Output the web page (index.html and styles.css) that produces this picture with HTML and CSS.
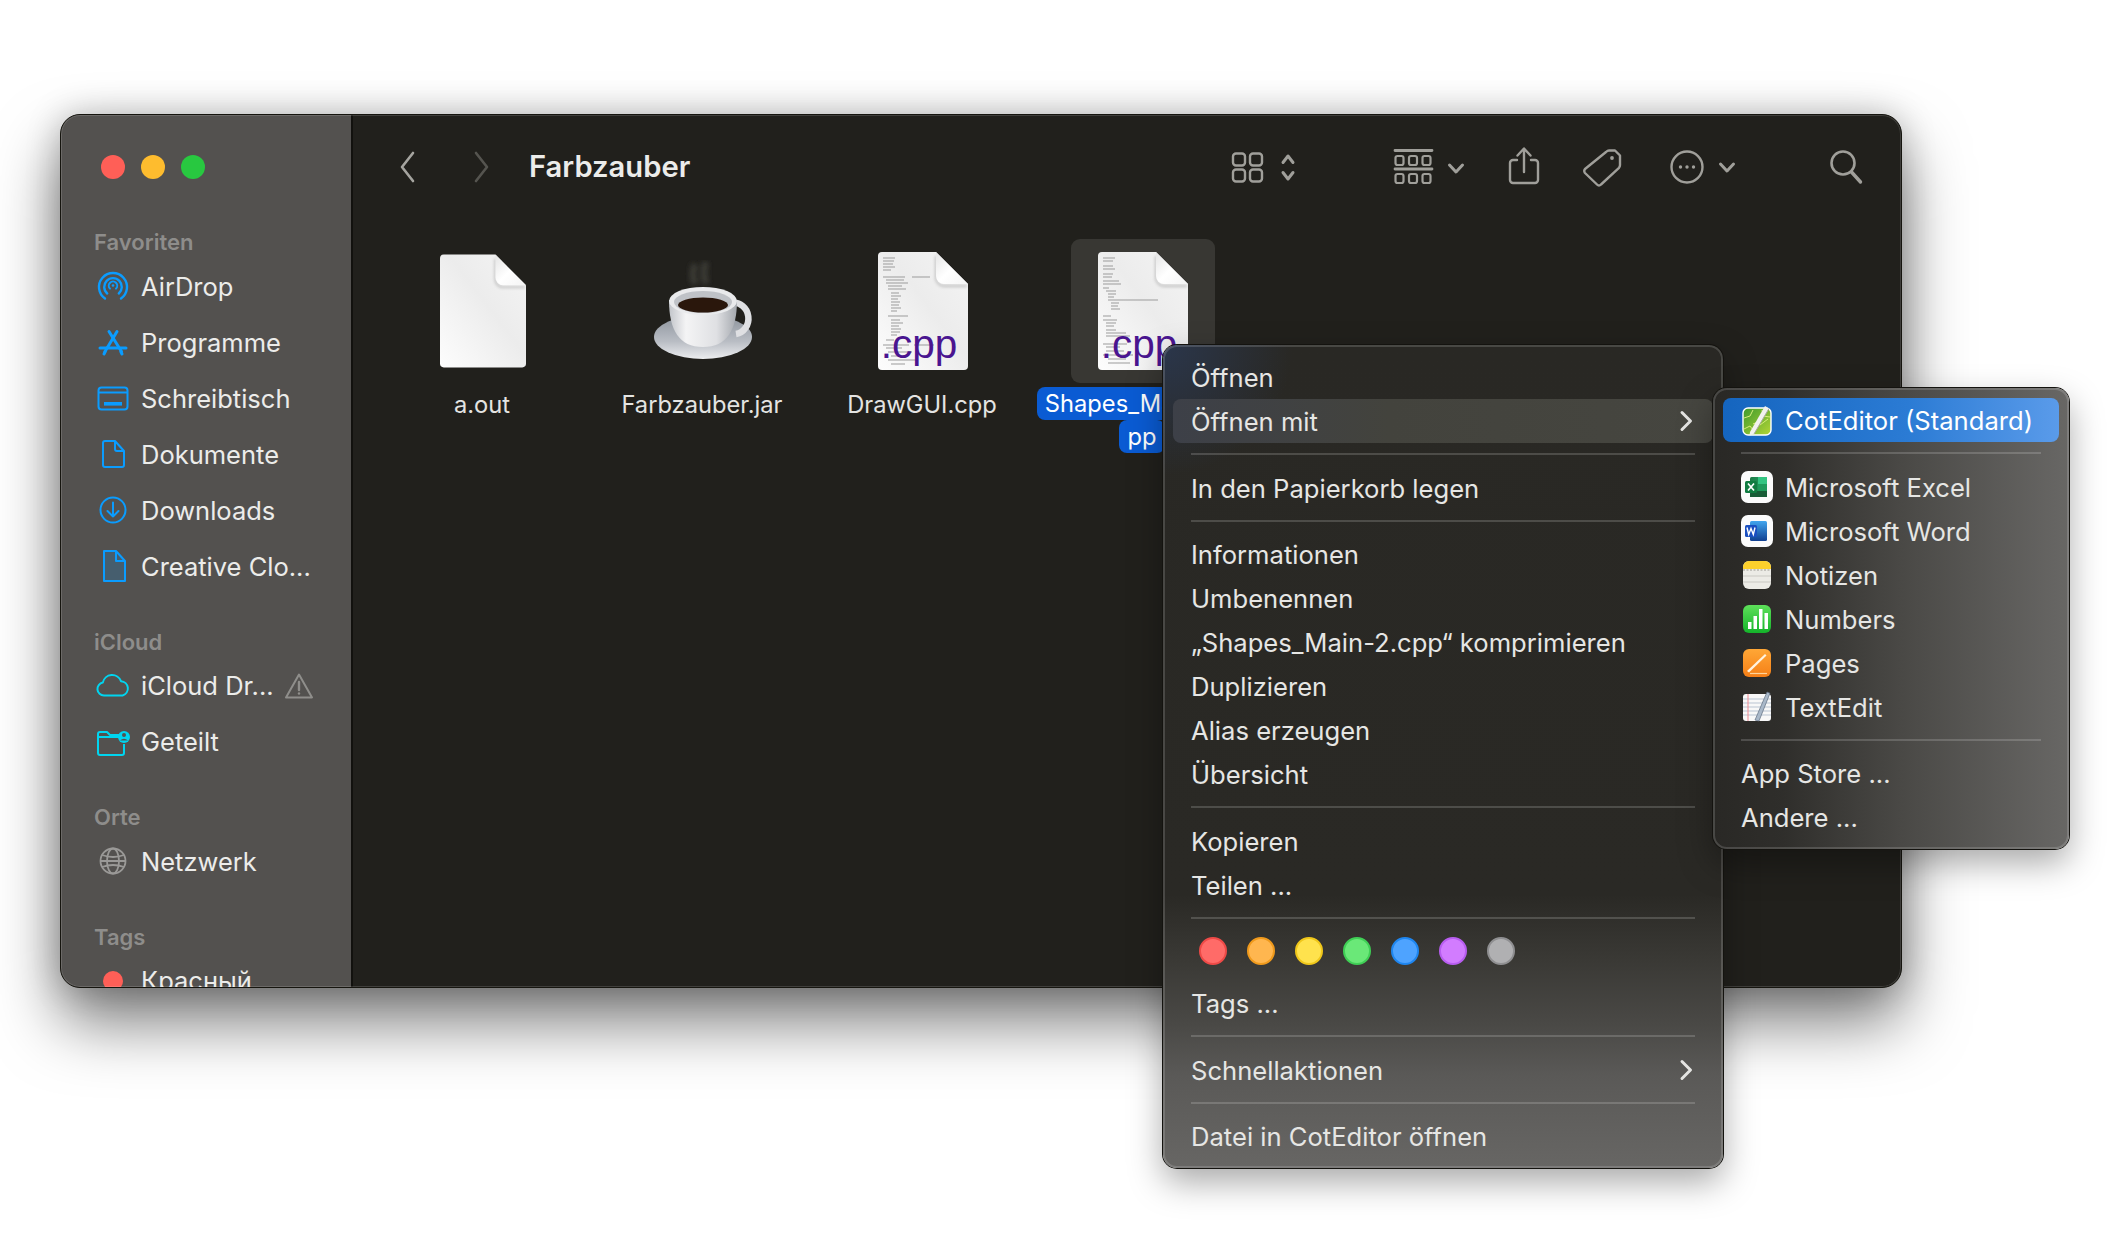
FILE: index.html
```html
<!DOCTYPE html>
<html lang="de">
<head>
<meta charset="utf-8">
<title>Farbzauber</title>
<link rel="stylesheet" href="styles.css">
</head>
<body>
<svg class="defs" width="0" height="0" aria-hidden="true">
  <defs>
    <linearGradient id="paper" x1="0" y1="1" x2="1" y2="0">
      <stop offset="0" stop-color="#fdfdfd"/><stop offset=".55" stop-color="#ececec"/><stop offset="1" stop-color="#f4f4f4"/>
    </linearGradient>
    <linearGradient id="fold" x1="0" y1="0" x2="1" y2="1">
      <stop offset="0" stop-color="#e4e4e4"/><stop offset=".5" stop-color="#ffffff"/><stop offset="1" stop-color="#f4f4f4"/>
    </linearGradient>
    <linearGradient id="cupg" x1="0" y1="0" x2="1" y2="0">
      <stop offset="0" stop-color="#c2c5ca"/><stop offset=".25" stop-color="#f4f4f5"/><stop offset=".7" stop-color="#dfe0e3"/><stop offset="1" stop-color="#a4a8ae"/>
    </linearGradient>
    <linearGradient id="saucer" x1="0" y1="0" x2="0" y2="1">
      <stop offset="0" stop-color="#8b929b"/><stop offset=".6" stop-color="#b9bdc4"/><stop offset="1" stop-color="#ecedef"/>
    </linearGradient>
    <linearGradient id="xl" x1="0" y1="0" x2="1" y2="0">
      <stop offset="0" stop-color="#1d7a45"/><stop offset="1" stop-color="#21a366"/>
    </linearGradient>
    <linearGradient id="wd" x1="0" y1="0" x2="0" y2="1">
      <stop offset="0" stop-color="#41a5ee"/><stop offset="1" stop-color="#103f91"/>
    </linearGradient>
    <linearGradient id="num" x1="0" y1="0" x2="0" y2="1">
      <stop offset="0" stop-color="#5ee05a"/><stop offset="1" stop-color="#14b32a"/>
    </linearGradient>
    <linearGradient id="pag" x1="0" y1="0" x2="0" y2="1">
      <stop offset="0" stop-color="#ffa736"/><stop offset="1" stop-color="#f57f17"/>
    </linearGradient>
    <linearGradient id="cot" x1="0" y1="0" x2="1" y2="1">
      <stop offset="0" stop-color="#3d9a2c"/><stop offset="1" stop-color="#b5d636"/>
    </linearGradient>
    <filter id="soft" x="-60%" y="-40%" width="220%" height="180%"><feGaussianBlur stdDeviation="2.600"/></filter>
    <filter id="flapshadow" x="-30%" y="-30%" width="160%" height="160%"><feGaussianBlur stdDeviation="1.600"/></filter>
    <symbol id="page" viewBox="0 0 90 118">
      <path d="M4 0H58L90 32V114a4 4 0 0 1-4 4H4a4 4 0 0 1-4-4V4a4 4 0 0 1 4-4Z" fill="url(#paper)"/>
      <path d="M58 4V26a8 8 0 0 0 8 8H89" fill="none" stroke="#000" stroke-opacity=".22" stroke-width="2" filter="url(#flapshadow)"/>
      <path d="M58 0L90 32H66a8 8 0 0 1-8-8Z" fill="url(#fold)"/>
    </symbol>
  </defs>
</svg>

<div class="window">
  <aside class="sidebar">
    <div class="lights"><i class="light red"></i><i class="light yellow"></i><i class="light green"></i></div>

    <section class="side-section">
      <h4 class="side-head">Favoriten</h4>
      <div class="side-row">
        <svg class="side-icon" viewBox="0 0 36 36" fill="none" stroke="#0a9cff" stroke-width="2.400" stroke-linecap="round">
          <path d="M10 30.500a14 14 0 1 1 16 0"/><path d="M12.200 25.500a8.800 8.800 0 1 1 11.600 0"/><path d="M15 20.600a4.200 4.200 0 1 1 6 0" stroke-width="2"/><circle cx="18" cy="17.500" r="1.300" fill="#0a9cff" stroke="none"/>
        </svg>
        <span>AirDrop</span>
      </div>
      <div class="side-row">
        <svg class="side-icon" viewBox="0 0 36 36" fill="none" stroke="#0a9cff" stroke-width="3" stroke-linecap="round">
          <path d="M14 7.500L26.500 27.500"/><path d="M22 7.500L10 27.500"/><path d="M5 24H31"/><path d="M9 30l1.200-2.500M27 30l-1.200-2.500"/>
        </svg>
        <span>Programme</span>
      </div>
      <div class="side-row">
        <svg class="side-icon" viewBox="0 0 36 36" fill="none" stroke="#0a9cff" stroke-width="2">
          <rect x="3.500" y="7.500" width="29" height="22" rx="3"/><path d="M3.500 12.500H32.500"/><rect x="9" y="22" width="18" height="3.600" fill="#0a9cff" stroke="none"/>
        </svg>
        <span>Schreibtisch</span>
      </div>
      <div class="side-row">
        <svg class="side-icon" viewBox="0 0 36 36" fill="none" stroke="#0a9cff" stroke-width="2" stroke-linejoin="round">
          <path d="M10 5H20L29 15V29a2 2 0 0 1-2 2H10a2 2 0 0 1-2-2V7a2 2 0 0 1 2-2Z"/><path d="M20 5V13a2 2 0 0 0 2 2H29"/>
        </svg>
        <span>Dokumente</span>
      </div>
      <div class="side-row">
        <svg class="side-icon" viewBox="0 0 36 36" fill="none" stroke="#0a9cff" stroke-width="2" stroke-linecap="round" stroke-linejoin="round">
          <circle cx="18" cy="18" r="12.500"/><path d="M18 10.500V24.500M12.500 19L18 24.500L23.500 19"/>
        </svg>
        <span>Downloads</span>
      </div>
      <div class="side-row">
        <svg class="side-icon" viewBox="0 0 36 36" stroke="#0a9cff" stroke-width="2" stroke-linejoin="round">
          <path d="M9 3H21L30 13V33H9Z" fill="#0a9cff" fill-opacity=".18"/><path d="M21 3V13H30" fill="none"/>
        </svg>
        <span>Creative Clo...</span>
      </div>
    </section>

    <section class="side-section">
      <h4 class="side-head">iCloud</h4>
      <div class="side-row">
        <svg class="side-icon" viewBox="0 0 36 36" fill="none" stroke="#00d5f0" stroke-width="2">
          <path d="M9 27.500a6.500 6.500 0 0 1-1.200-12.900 9.500 9.500 0 0 1 18.200-1.400 7.300 7.300 0 0 1 1.600 14.300Z" stroke-linejoin="round"/>
        </svg>
        <span class="side-clip">iCloud Dr...</span>
        <svg class="warn" width="30" height="28" viewBox="0 0 30 28" fill="none" stroke="#8f8e8b" stroke-width="2" stroke-linejoin="round">
          <path d="M15 2.500L28 25.500H2Z"/><path d="M15 10V18" stroke-width="2.400" stroke-linecap="round"/><circle cx="15" cy="21.500" r="1.200" fill="#8f8e8b" stroke="none"/>
        </svg>
      </div>
      <div class="side-row">
        <svg class="side-icon" viewBox="0 0 36 36" fill="none" stroke="#00d5f0" stroke-width="2" stroke-linejoin="round">
          <path d="M3 10a2 2 0 0 1 2-2h7l3 3h10M3 13H24M29 20v9a2 2 0 0 1-2 2H5a2 2 0 0 1-2-2V10"/>
          <circle cx="29" cy="13" r="6" fill="#00d5f0" stroke="none"/><circle cx="29" cy="11" r="2" fill="#53514f" stroke="none"/><path d="M25 16.500q4-3.500 8 0Z" fill="#53514f" stroke="none"/>
        </svg>
        <span>Geteilt</span>
      </div>
    </section>

    <section class="side-section">
      <h4 class="side-head">Orte</h4>
      <div class="side-row">
        <svg class="side-icon" viewBox="0 0 36 36" fill="none" stroke="#9a9997" stroke-width="1.800">
          <circle cx="18" cy="18" r="12.500"/><ellipse cx="18" cy="18" rx="6" ry="12.500"/><path d="M7 12q11 4 22 0M7 24q11-4 22 0M5.500 18H30.500"/>
        </svg>
        <span>Netzwerk</span>
      </div>
    </section>

    <section class="side-section">
      <h4 class="side-head">Tags</h4>
      <div class="side-row">
        <span class="tag-dot-box"><i class="tag-dot"></i></span>
        <span>Красный</span>
      </div>
    </section>
  </aside>

  <main class="main">
    <header class="toolbar">
      <svg class="tb tb-back" width="40" height="40" viewBox="0 0 40 40" fill="none" stroke="#a5a49f" stroke-width="2.600" stroke-linecap="round" stroke-linejoin="round"><path d="M25 6L14 20L25 34"/></svg>
      <svg class="tb tb-fwd" width="40" height="40" viewBox="0 0 40 40" fill="none" stroke="#55544f" stroke-width="2.600" stroke-linecap="round" stroke-linejoin="round"><path d="M15 6L26 20L15 34"/></svg>
      <h1 class="title">Farbzauber</h1>
      <svg class="tb tb-view" width="70" height="40" viewBox="0 0 70 40" fill="none" stroke="#a09f9a" stroke-width="2.400" stroke-linecap="round" stroke-linejoin="round">
        <rect x="4" y="6.500" width="12" height="12" rx="3"/><rect x="21" y="6.500" width="12" height="12" rx="3"/><rect x="4" y="22.500" width="12" height="12" rx="3"/><rect x="21" y="22.500" width="12" height="12" rx="3"/>
        <path d="M54 15.500L59 9L64 15.500M54 25.500L59 32L64 25.500" stroke-width="3"/>
      </svg>
      <svg class="tb tb-group" width="80" height="40" viewBox="0 0 80 40" fill="none" stroke="#a09f9a" stroke-width="2.200" stroke-linejoin="round" stroke-linecap="round">
        <path d="M4 3.500H41M4 22H41" stroke-width="2.800"/>
        <rect x="4.500" y="9" width="8" height="9" rx="2"/><rect x="18" y="9" width="8" height="9" rx="2"/><rect x="31.500" y="9" width="8" height="9" rx="2"/>
        <rect x="4.500" y="27" width="8" height="9" rx="2"/><rect x="18" y="27" width="8" height="9" rx="2"/><rect x="31.500" y="27" width="8" height="9" rx="2"/>
        <path d="M58.500 18L65 25L71.500 18" stroke-width="3"/>
      </svg>
      <svg class="tb tb-share" width="40" height="40" viewBox="0 0 40 40" fill="none" stroke="#a09f9a" stroke-width="2.400" stroke-linecap="round" stroke-linejoin="round">
        <path d="M13 13H9a3 3 0 0 0-3 3V33a3 3 0 0 0 3 3H31a3 3 0 0 0 3-3V16a3 3 0 0 0-3-3H27"/><path d="M20 25V2M13.500 8.500L20 1.500L26.500 8.500"/>
      </svg>
      <svg class="tb tb-tag" width="40" height="40" viewBox="0 0 40 40" fill="none" stroke="#a09f9a" stroke-width="2.400" stroke-linejoin="round">
        <path d="M26 3.500H32L37 8.500V18q0 1.500-1 2.800L18 37.500q-2 2-4 0L2 26q-1.500-2 0-4L23 5q1.500-1.500 3-1.500Z"/><circle cx="29" cy="11" r="1.900" fill="#a09f9a" stroke="none"/>
      </svg>
      <svg class="tb tb-more" width="70" height="40" viewBox="0 0 70 40" fill="none" stroke="#a09f9a" stroke-width="2.400" stroke-linecap="round" stroke-linejoin="round">
        <circle cx="19" cy="20" r="15.500"/><circle cx="12.500" cy="20" r="1.700" fill="#a09f9a" stroke="none"/><circle cx="19" cy="20" r="1.700" fill="#a09f9a" stroke="none"/><circle cx="25.500" cy="20" r="1.700" fill="#a09f9a" stroke="none"/>
        <path d="M52.500 17L59 24L65.500 17" stroke-width="3"/>
      </svg>
      <svg class="tb tb-search" width="40" height="40" viewBox="0 0 40 40" fill="none" stroke="#a09f9a" stroke-width="2.600" stroke-linecap="round">
        <circle cx="18" cy="16" r="11.500"/><path d="M26.500 25L35.500 35" stroke-width="3.400"/>
      </svg>
    </header>

    <div class="files">
      <figure class="file">
        <div class="file-box"><svg class="doc-blank" width="86" height="114"><use href="#page"/></svg></div>
        <figcaption class="file-name"><span>a.out</span></figcaption>
      </figure>
      <figure class="file">
        <div class="file-box">
          <svg width="105" height="102" viewBox="651 250 105 102">
            <path d="M695 254q-4 10 0 20M706 252q-4 10 0 22" fill="none" stroke="#3b3a36" stroke-width="7" filter="url(#soft)"/>
            <ellipse cx="703" cy="327" rx="49" ry="22" fill="url(#saucer)"/>
            <path d="M732 293a12 13 0 0 1 4 31" fill="none" stroke="#dfe0e3" stroke-width="6.500"/>
            <path d="M669 290c0 30 10 47 34 47s34-17 34-47Z" fill="url(#cupg)"/>
            <ellipse cx="703" cy="291" rx="34" ry="14" fill="#e9eaec"/>
            <ellipse cx="703" cy="292" rx="29" ry="11" fill="#bfc2c7"/>
            <ellipse cx="703" cy="295" rx="25" ry="7.500" fill="#2a170c"/>
          </svg>
        </div>
        <figcaption class="file-name"><span>Farbzauber.jar</span></figcaption>
      </figure>
      <figure class="file">
        <div class="file-box">
          <div class="doc">
            <svg width="90" height="118"><use href="#page"/><path d="M5 6h12M5 9h11M5 12h10M5 15h12M5 18h8M5 25h22M34 25h18M8 28h18M8 31h22M10 34h14M10 37h18M13 41h8M13 44h10M13 47h7M13 50h9M13 53h8M13 56h10M13 59h6M10 64h20M13 68h9M13 71h12M13 74h8M13 77h10M13 80h9M13 83h6M8 88h8M5 93h26M36 93h20M8 96h16M10 100h24M13 104h10M10 108h28M13 112h14" stroke="#9b9b9b" stroke-width="1" fill="none"/></svg>
            <span class="ext">.cpp</span>
          </div>
        </div>
        <figcaption class="file-name"><span>DrawGUI.cpp</span></figcaption>
      </figure>
      <figure class="file">
        <div class="file-box selected">
          <div class="doc">
            <svg width="90" height="118"><use href="#page"/><path d="M5 6h12M5 9h10M5 14h10M5 17h12M5 22h10M5 25h9M5 29h16M5 32h18M5 36h6M8 39h10M10 42h8M10 45h6M10 48h50M13 51h8M13 54h7M13 57h9M5 64h8M5 68h14M8 71h10M8 74h8M8 78h10M8 81h20M8 84h24M5 92h24M8 95h14M8 99h18M5 103h30M10 107h18M10 111h22" stroke="#9b9b9b" stroke-width="1" fill="none"/></svg>
            <span class="ext">.cpp</span>
          </div>
        </div>
        <figcaption class="file-name picked"><span>Shapes_Main-2.c</span><span>pp</span></figcaption>
      </figure>
    </div>
  </main>
</div>

<nav class="menu menu-main">
  <div class="item">Öffnen</div>
  <div class="item hover"><span>Öffnen mit</span><svg class="caret" width="14" height="22" viewBox="0 0 14 22" fill="none" stroke="#e4e4e2" stroke-width="3" stroke-linecap="round" stroke-linejoin="round"><path d="M3 2.500L11.500 11L3 19.500"/></svg></div>
  <hr class="sep">
  <div class="item">In den Papierkorb legen</div>
  <hr class="sep">
  <div class="item">Informationen</div>
  <div class="item">Umbenennen</div>
  <div class="item">„Shapes_Main-2.cpp“ komprimieren</div>
  <div class="item">Duplizieren</div>
  <div class="item">Alias erzeugen</div>
  <div class="item">Übersicht</div>
  <hr class="sep">
  <div class="item">Kopieren</div>
  <div class="item">Teilen ...</div>
  <hr class="sep">
  <div class="dots">
    <i class="dot d-red"></i><i class="dot d-orange"></i><i class="dot d-yellow"></i><i class="dot d-green"></i><i class="dot d-blue"></i><i class="dot d-purple"></i><i class="dot d-gray"></i>
  </div>
  <div class="item">Tags ...</div>
  <hr class="sep">
  <div class="item"><span>Schnellaktionen</span><svg class="caret" width="14" height="22" viewBox="0 0 14 22" fill="none" stroke="#e4e4e2" stroke-width="3" stroke-linecap="round" stroke-linejoin="round"><path d="M3 2.500L11.500 11L3 19.500"/></svg></div>
  <hr class="sep">
  <div class="item">Datei in CotEditor öffnen</div>
</nav>

<nav class="menu menu-sub">
  <div class="item app active">
    <svg class="app-icon" viewBox="0 0 32 32">
      <rect x="2" y="4" width="28" height="27" rx="5" fill="url(#cot)" stroke="#fff" stroke-width="1.400"/>
      <path d="M3 14l6-2 3-6M12 20l5-2 2 3 8-6M3 25l6-3 3 4M21 6l1 6 7 1" fill="none" stroke="#d6ee7a" stroke-width="1"/>
      <path d="M9 28L24 2l4 2.500L13 30l-4.500 1.500Z" fill="#f2f2ee"/><path d="M13 30L28 4.500" stroke="#a8a8a0" stroke-width="1"/>
    </svg>
    <span>CotEditor (Standard)</span>
  </div>
  <hr class="sep">
  <div class="item app">
    <svg class="app-icon" viewBox="0 0 32 32">
      <rect width="32" height="32" rx="7" fill="#fbfbfb"/>
      <rect x="9" y="6" width="17" height="20" rx="1.500" fill="url(#xl)"/><rect x="17" y="6" width="9" height="7" fill="#33c481"/><rect x="17" y="13" width="9" height="7" fill="#1f9a5c"/><rect x="9" y="20" width="17" height="6" fill="#185c37"/>
      <rect x="4" y="10" width="12" height="12" rx="1.500" fill="#107c41"/>
      <path d="M7 12.500l6 7M13 12.500l-6 7" stroke="#fff" stroke-width="1.700"/>
    </svg>
    <span>Microsoft Excel</span>
  </div>
  <div class="item app">
    <svg class="app-icon" viewBox="0 0 32 32">
      <rect width="32" height="32" rx="7" fill="#fbfbfb"/>
      <rect x="9" y="6" width="17" height="20" rx="1.500" fill="url(#wd)"/>
      <rect x="4" y="10" width="12" height="12" rx="1.500" fill="#1a4fc0"/>
      <path d="M6 12.500l1.700 7 2.300-6 2.300 6 1.700-7" fill="none" stroke="#fff" stroke-width="1.400"/>
    </svg>
    <span>Microsoft Word</span>
  </div>
  <div class="item app">
    <svg class="app-icon" viewBox="0 0 32 32">
      <rect x="2" y="2" width="28" height="28" rx="6" fill="#ecebe6"/>
      <path d="M2 10V8a6 6 0 0 1 6-6H24a6 6 0 0 1 6 6v2Z" fill="#fdd02c"/>
      <path d="M2 11H30" stroke="#9a9a94" stroke-width="1" stroke-dasharray="2 1.500"/>
      <path d="M2 17H30M2 23H30" stroke="#c9c8c2" stroke-width="1"/>
    </svg>
    <span>Notizen</span>
  </div>
  <div class="item app">
    <svg class="app-icon" viewBox="0 0 32 32">
      <rect x="2" y="2" width="28" height="28" rx="6" fill="url(#num)"/>
      <rect x="7" y="19" width="3.500" height="7" fill="#fff"/><rect x="12.500" y="13" width="3.500" height="13" fill="#fff"/><rect x="18" y="6" width="3.500" height="20" fill="#fff"/><rect x="23.500" y="10" width="3.500" height="16" fill="#fff"/>
    </svg>
    <span>Numbers</span>
  </div>
  <div class="item app">
    <svg class="app-icon" viewBox="0 0 32 32">
      <rect x="2" y="2" width="28" height="28" rx="6" fill="url(#pag)"/>
      <path d="M6 24L24 7l1.500 1.500L8 25.500Z" fill="#fff3df"/><path d="M9 26.500H26" stroke="#ffd39a" stroke-width="1.200"/>
    </svg>
    <span>Pages</span>
  </div>
  <div class="item app">
    <svg class="app-icon" viewBox="0 0 32 32">
      <rect x="2" y="3" width="28" height="27" rx="3" fill="#f8f8f8"/>
      <path d="M2 8H30M2 12H30M2 16H30M2 20H30M2 24H30" stroke="#b9c4d2" stroke-width="1"/>
      <path d="M7 3V30" stroke="#ef8a92" stroke-width="1"/>
      <path d="M14 29L26 1l3 1.200L18 30Z" fill="#a9b8c9" stroke="#5e6d80" stroke-width=".7"/>
    </svg>
    <span>TextEdit</span>
  </div>
  <hr class="sep">
  <div class="item">App Store ...</div>
  <div class="item">Andere ...</div>
</nav>
</body>
</html>
```
FILE: styles.css
```css
* { box-sizing: border-box; }
html, body { margin: 0; height: 100%; }
body {
  position: relative;
  width: 2126px;
  height: 1251px;
  overflow: hidden;
  padding: 114px 0 0 60px;
  background: #fff;
  font-family: Inter, "Noto Sans", "Liberation Sans", sans-serif;
  -webkit-font-smoothing: antialiased;
}
.defs { position: absolute; }

/* Window */
.window {
  position: relative;
  display: flex;
  width: 1842px;
  height: 874px;
  overflow: hidden;
  border-radius: 20px;
  border: 1px solid #16150f;
  background: #21201c;
  box-shadow: 0 34px 64px rgba(0,0,0,.52), 0 0 34px rgba(0,0,0,.22);
}
.window::after {
  content: "";
  position: absolute;
  inset: 0;
  border-radius: 19px;
  box-shadow: inset 0 0 0 1px rgba(255,255,255,.14);
  pointer-events: none;
}

/* Sidebar */
.sidebar {
  flex: 0 0 292px;
  height: 100%;
  overflow: hidden;
  padding: 40px 0 0 33px;
  background: #53514f;
  border-right: 2px solid #12110e;
}
.lights { display: flex; gap: 16px; margin: 0 0 49px 7px; }
.light { width: 24px; height: 24px; border-radius: 50%; }
.red { background: #ff5f57; }
.yellow { background: #febc2e; }
.green { background: #28c840; }
.side-section { margin-bottom: 33.5px; }
.side-head {
  margin: 0 0 2px;
  height: 28px;
  font-size: 22px;
  line-height: 28px;
  font-weight: 600;
  color: #8e8d8b;
}
.side-row {
  display: flex;
  align-items: center;
  height: 56px;
  color: #ececea;
  font-size: 25.500px;
  white-space: nowrap;
}
.side-icon { flex: none; width: 36px; height: 36px; margin: 0 10px 0 1px; }
.warn { margin-left: 10px; }
.tag-dot-box { display: flex; justify-content: center; align-items: center; width: 36px; margin: 0 10px 0 1px; }
.tag-dot { width: 20px; height: 20px; border-radius: 50%; background: #ff5f57; }

/* Main area */
.main { flex: 1; min-width: 0; }
.toolbar {
  display: flex;
  align-items: center;
  height: 103px;
  padding: 0 36px 0 35px;
}
.tb { flex: none; }
.tb-fwd { margin-left: 33px; }
.title {
  margin: 0 0 0 28px;
  font-size: 29.200px;
  font-weight: 600;
  color: #ececea;
}
.tb-view { margin-left: auto; }
.tb-group { margin-left: 92px; }
.tb-share { margin-left: 33px; }
.tb-tag { margin-left: 39px; }
.tb-more { margin-left: 45px; }
.tb-search { margin-left: 87px; }

.files { display: flex; padding: 21px 0 0 20px; }
.file { width: 220px; margin: 0; display: flex; flex-direction: column; align-items: center; }
.file-box {
  display: flex;
  align-items: center;
  justify-content: center;
  width: 144px;
  height: 144px;
  border-radius: 9px;
}
.file-box.selected { background: #383733; }
.doc { position: relative; width: 90px; height: 118px; }
.doc svg { display: block; }
.ext {
  position: absolute;
  left: -10px;
  right: -2px;
  bottom: 4px;
  text-align: center;
  font-family: "Liberation Sans", Arial, sans-serif;
  font-size: 40.500px;
  line-height: 44px;
  color: #4a1590;
}
.file-name {
  margin: 5px 0 0 -2px;
  width: 220px;
  text-align: center;
  font-size: 23.700px;
  line-height: 33px;
  color: #e4e4e2;
}
.picked { margin-top: 4px; color: #fff; }
.picked span {
  display: block;
  width: fit-content;
  margin: 0 auto;
  padding: 1px 8px 0;
  line-height: 32px;
  border-radius: 8px;
  background: #0a5bd3;
}

/* Menus */
.menu {
  position: absolute;
  border-radius: 14px;
  padding: 10px 0;
  color: #e6e6e4;
  font-size: 25.600px;
  box-shadow: 0 0 0 1px #14130f, inset 0 0 0 2px rgba(255,255,255,.15), 0 14px 34px rgba(0,0,0,.34);
}
.menu-main {
  left: 1163px;
  top: 345px;
  width: 560px;
  background:
    radial-gradient(circle at 0 0, rgba(44,66,108,.55), rgba(44,66,108,0) 130px),
    linear-gradient(180deg, #292824 0, #2a2925 550px, #3a3935 615px, #4a4946 680px, #5a5957 730px, #676664 822px);
}
.menu-sub {
  left: 1713px;
  top: 388px;
  width: 356px;
  background: linear-gradient(90deg, #292825 0, #2f2e2b 70px, #4a4946 190px, #686765 356px);
  z-index: 2;
}
.item {
  display: flex;
  align-items: center;
  justify-content: space-between;
  height: 44px;
  margin: 0 10px;
  padding: 1px 18px 0;
  border-radius: 8px;
  white-space: nowrap;
}
.hover { background: linear-gradient(90deg, #3d4048, #43433d 40%, #464640 100%); }
.app { justify-content: flex-start; }
.app-icon { flex: none; width: 32px; height: 32px; margin: -1px 12px 0 0; }
.active { color: #fff; background: linear-gradient(90deg, #1565bf, #2b7bd4 55%, #5a9bea); }
.caret { margin: -1px 2px 0 0; }
.sep {
  height: 2px;
  margin: 10.250px 28px;
  border: 0;
  background: rgba(255,255,255,.17);
}
.dots { display: flex; gap: 20px; height: 52px; padding: 8px 0 0 36px; }
.dot { width: 28px; height: 28px; border-radius: 50%; border: 2px solid; }
.d-red { background: #ff6b68; border-color: #ee4a47; }
.d-orange { background: #ffb64f; border-color: #f09a1c; }
.d-yellow { background: #ffe24d; border-color: #f0c71a; }
.d-green { background: #6ae878; border-color: #3fcf55; }
.d-blue { background: #4ea3ff; border-color: #1e86f0; }
.d-purple { background: #d27cff; border-color: #b85df0; }
.d-gray { background: #b0b0b2; border-color: #8f8f91; }
```
